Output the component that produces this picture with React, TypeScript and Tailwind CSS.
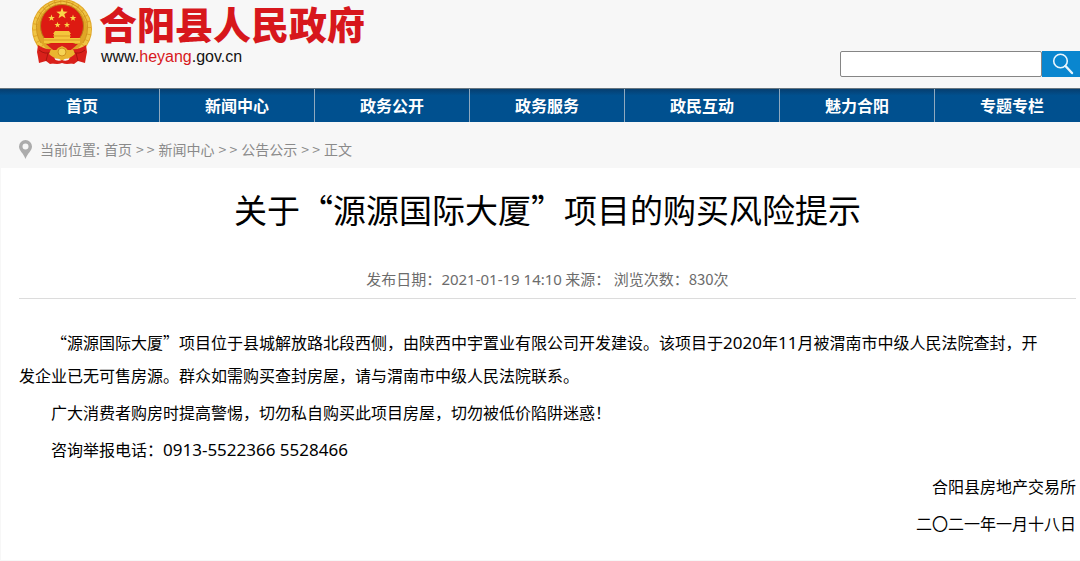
import React from 'react';

const navItems = ['首页', '新闻中心', '政务公开', '政务服务', '政民互动', '魅力合阳', '专题专栏'];

const crumbs = ['首页', '新闻中心', '公告公示'];

const Star: React.FC<{ x: number; y: number; size: number }> = ({ x, y, size }) => (
  <path
    transform={`translate(${x} ${y}) scale(${size})`}
    d="M0-1 .24-.32.95-.31.38.12.59.81 0 .4-.59.81-.38.12-.95-.31-.24-.32Z"
    fill="#f9d648"
  />
);

const Emblem = () => (
  <svg className="h-[66px] w-[62px] shrink-0" viewBox="0 0 62 66" aria-hidden="true">
    {/* Wheat ring */}
    <circle cx="31" cy="29" r="30" fill="#e0a526" />
    <circle cx="31" cy="29" r="27" fill="none" stroke="#f0c544" strokeWidth="4" strokeDasharray="5 1" />
    <path d="M31 1q-19 2-25 20-2 13 4 22M31 1q19 2 25 20 2 13-4 22" fill="none" stroke="#cf931f" strokeWidth="1" />
    <circle cx="31" cy="26" r="21.5" fill="#dd1a12" stroke="#b97b16" strokeWidth="1" />
    <Star x={31} y={13.5} size={6} />
    <Star x={20.5} y={18} size={3.5} />
    <Star x={42} y={18} size={3.5} />
    <Star x={26.5} y={25} size={3.2} />
    <Star x={36} y={25} size={3.2} />
    {/* Gate tower */}
    <path d="M24 31h14l2 3H22zM23 34h16v4H23zM13 38h36v5H13z" fill="#f4c63c" />
    <path d="M22 36h18M13 40h36" stroke="#d99a22" strokeWidth="1" />
    {/* Ribbons and gear */}
    <path d="M7 45q7 5 14 4l4 14-6 1-4-3-7 2-1-6-1-5z" fill="#d9201a" />
    <path d="M55 45q-7 5-14 4l-4 14 6 1 4-3 7 2 1-6 1-5z" fill="#d9201a" />
    <path d="M15 44h32l-7 6H22z" fill="#d9201a" />
    <path d="M8 50q6 5 12 2M54 50q-6 5-12 2M15 61l2-8M47 61l-2-8" fill="none" stroke="#a9140f" strokeWidth="1" />
    <path d="M20 49q5 3 7-1l4-2 4 2q2 4 7 1l2 5q-5 5-9 4l-4 3-4-3q-4 1-9-4z" fill="#eab52f" />
    <circle cx="31" cy="52" r="4" fill="#f6d455" stroke="#cf931f" strokeWidth="1" />
    <path d="M23 59q4 3 8 1 4 2 8-1l2 4q-5 2-10 0-5 2-10 0z" fill="#d9201a" />
  </svg>
);

const SiteHeader = () => (
  <header className="flex h-[88px] items-start justify-between pl-[31px]">
    <a href="#" className="flex items-start">
      <Emblem />
      <span className="flex flex-col pl-[6px] pt-[5px] font-['Liberation_Sans','Noto_Sans_CJK_SC',sans-serif]">
        <span className="whitespace-nowrap text-[38px] leading-[43px] font-black text-[#d7171c]">合阳县人民政府</span>
        <span className="pl-[2px] text-base leading-[18px] text-[#111]">
          www.<span className="text-[#d7171c]">heyang</span>.gov.cn
        </span>
      </span>
    </a>
    <form className="mt-[51px] flex h-[26px]" onSubmit={(e) => e.preventDefault()}>
      <input
        type="text"
        aria-label="搜索"
        className="w-[202px] rounded-[2px] border border-[#858585] bg-white px-1 text-sm outline-none"
      />
      <button type="submit" aria-label="搜索" className="flex w-[38px] items-center justify-center bg-[#0a86cf] pl-1">
        <svg className="h-[22px] w-[22px]" viewBox="0 0 22 22" fill="none" stroke="#e8f5fd">
          <circle cx="8.5" cy="8" r="6.8" strokeWidth="1.6" />
          <path d="M13.5 13 20 20" strokeWidth="2.4" strokeLinecap="round" />
        </svg>
      </button>
    </form>
  </header>
);

const MainNav = () => (
  <nav className="h-[34px] overflow-hidden border-t border-[#66757f] bg-linear-to-b from-[#063f70] to-[#00508f] to-20% pl-[5px]">
    <ul className="flex h-full">
      {navItems.map((item) => (
        <li key={item} className="w-[155px] shrink-0 border-r border-[#8fa9bf]">
          <a href="#" className="block text-center text-base leading-[32px] font-bold text-white">
            {item}
          </a>
        </li>
      ))}
    </ul>
  </nav>
);

const Breadcrumb = () => (
  <div className="flex h-[46px] items-center pl-[19px] pt-[8px] text-sm text-[#8a8a8a]">
    <svg className="h-[19px] w-[13px]" viewBox="0 0 13 19" aria-hidden="true">
      <path
        d="M6.5 0A6.5 6.5 0 0 0 0 6.5C0 11 4.5 13 6.5 19 8.5 13 13 11 13 6.5A6.5 6.5 0 0 0 6.5 0Zm0 3.5a3 3 0 1 1 0 6 3 3 0 0 1 0-6Z"
        fill="#acacac"
        fillRule="evenodd"
      />
    </svg>
    <span className="pl-2">当前位置:</span>
    {crumbs.map((crumb) => (
      <React.Fragment key={crumb}>
        <a href="#" className="pl-1">{crumb}</a>
        <span className="pl-1">&gt; &gt;</span>
      </React.Fragment>
    ))}
    <span className="pl-1">正文</span>
  </div>
);

const Num: React.FC<{ children: React.ReactNode }> = ({ children }) => (
  <span className="font-['Noto_Sans',sans-serif] text-[17px]">{children}</span>
);

const Article = () => (
  <article className="ml-px bg-white pl-[18px] pr-1 pb-[20px] text-black">
    <h1 className="pt-[17px] text-center text-[33px] leading-[48px] font-normal">
      关于“源源国际大厦”项目的购买风险提示
    </h1>
    <p className="mt-[34px] border-b border-[#dcdcdc] pb-[7px] text-center text-[15px] leading-[24px] text-[#6c6c6c]">
      发布日期：<span className="font-['Noto_Sans',sans-serif]">2021-01-19 14:10</span> 来源： 浏览次数：830次
    </p>
    <div className="flex flex-col gap-1 pt-[27px] text-base leading-[33px]">
      <p className="indent-[32px]">
        “源源国际大厦”项目位于县城解放路北段西侧，由陕西中宇置业有限公司开发建设。该项目于<Num>2020</Num>年<Num>11</Num>月被渭南市中级人民法院查封，开
        <br className="hidden lg:inline" />
        发企业已无可售房源。群众如需购买查封房屋，请与渭南市中级人民法院联系。
      </p>
      <p className="indent-[32px]">广大消费者购房时提高警惕，切勿私自购买此项目房屋，切勿被低价陷阱迷惑！</p>
      <p className="indent-[32px]">咨询举报电话：<Num>0913-5522366 5528466</Num></p>
      <p className="text-right">合阳县房地产交易所</p>
      <p className="text-right">二〇二一年一月十八日</p>
    </div>
  </article>
);

export default function App() {
  return (
    <div lang="zh-CN" className="min-h-screen bg-[#f7f7f7] font-['Noto_Sans_CJK_SC',sans-serif]">
      <SiteHeader />
      <MainNav />
      <Breadcrumb />
      <Article />
    </div>
  );
}
